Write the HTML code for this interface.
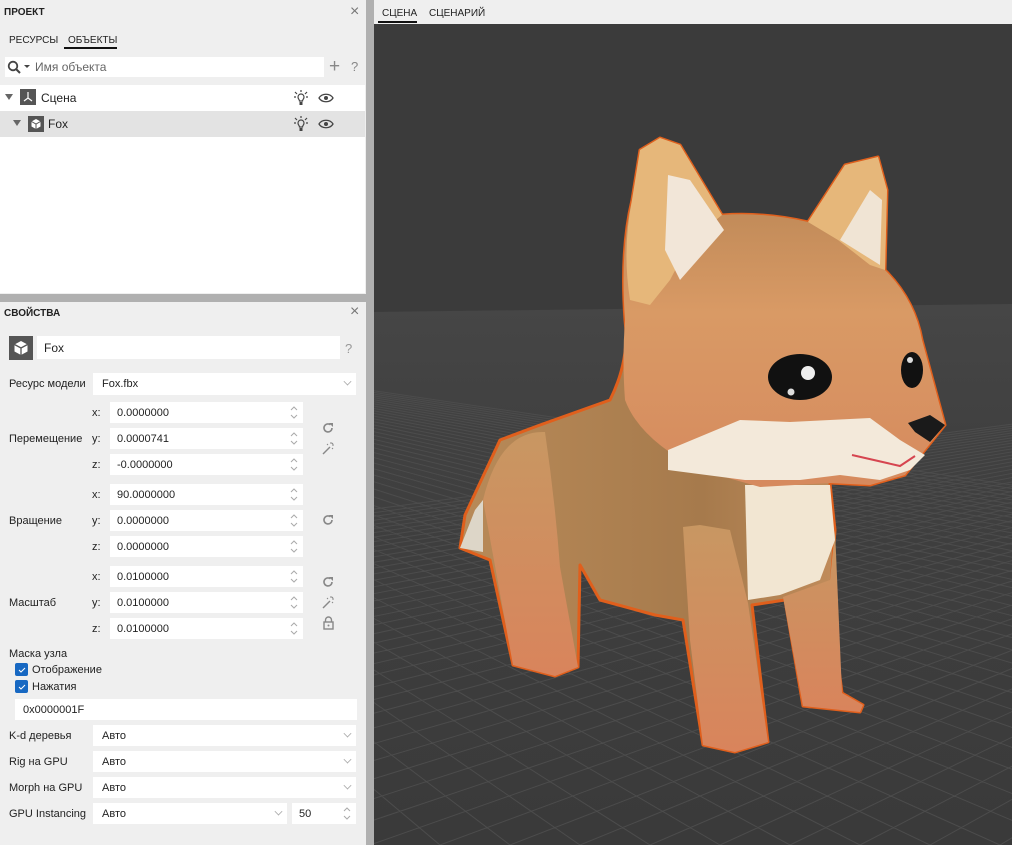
<!DOCTYPE html>
<html><head><meta charset="utf-8"><style>
*{box-sizing:border-box;margin:0;padding:0}
body{width:1012px;height:845px;overflow:hidden;background:#efefef;font-family:"Liberation Sans",sans-serif;font-size:11px;color:#222;position:relative}
.a{position:absolute}
.f{position:absolute;background:#fff;height:21px}
.f span{position:absolute;left:7px;top:5px}
.lbl{position:absolute;font-size:11px}
.spin{position:absolute;right:5px;top:3px;width:8px;height:15px}
.dd{position:absolute;background:#fff;height:21px}
.dd span{position:absolute;left:9px;top:5px}
.chev{position:absolute;right:5px;width:7px;height:7px;border-right:1px solid #aaa;border-bottom:1px solid #aaa;transform:rotate(45deg) scale(.8);top:5px}
</style></head><body>
<div class="a" style="left:4px;top:7px;font-weight:bold;font-size:10px">ПРОЕКТ</div>
<div class="a" style="left:350px;top:3px;font-size:16px;color:#777">×</div>
<div class="a" style="left:9px;top:35px;font-size:10px">РЕСУРСЫ</div>
<div class="a" style="left:68px;top:35px;font-size:10px">ОБЪЕКТЫ</div>
<div class="a" style="left:64px;top:47px;width:53px;height:2px;background:#111"></div>
<div class="a" style="left:5px;top:57px;width:319px;height:20px;background:#fff"></div>
<svg class="a" style="left:7px;top:60px" width="26" height="14"><circle cx="6" cy="6" r="4.3" fill="none" stroke="#444" stroke-width="1.8"/><line x1="9" y1="9" x2="13" y2="13" stroke="#444" stroke-width="2"/><path d="M17 5h6l-3 3z" fill="#444"/></svg>
<div class="a" style="left:35px;top:60px;font-size:12px;color:#666">Имя объекта</div>
<div class="a" style="left:329px;top:56px;font-size:19px;color:#888">+</div>
<div class="a" style="left:351px;top:59px;font-size:13px;color:#888">?</div>
<div class="a" style="left:0;top:85px;width:365px;height:208px;background:#fff"></div>
<div class="a" style="left:0;top:111px;width:365px;height:26px;background:#e3e3e3"></div>
<div class="a" style="left:5px;top:94px;border-left:4px solid transparent;border-right:4px solid transparent;border-top:6px solid #666"></div>
<div class="a" style="left:20px;top:89px;width:16px;height:16px;background:#555"></div>
<svg class="a" style="left:20px;top:89px" width="16" height="16"><path d="M8 3v6M8 9l-4 3M8 9l4 3" stroke="#fff" stroke-width="1.2" fill="none"/></svg>
<div class="a" style="left:41px;top:91px;font-size:12px">Сцена</div>
<div class="a" style="left:13px;top:120px;border-left:4px solid transparent;border-right:4px solid transparent;border-top:6px solid #666"></div>
<div class="a" style="left:28px;top:116px;width:16px;height:16px;background:#555"></div>
<svg class="a" style="left:28px;top:116px" width="16" height="16"><path d="M8 3l4.5 2.5v5L8 13 3.5 10.5v-5z" fill="#fff"/><path d="M3.5 5.5L8 8l4.5-2.5M8 8v5" stroke="#555" stroke-width="1" fill="none"/></svg>
<div class="a" style="left:48px;top:117px;font-size:12px">Fox</div>
<svg class="a" style="left:293px;top:89px" width="16" height="18"><path d="M5 8a3 3 0 1 1 6 0c0 2-1.5 2.5-1.5 4h-3C6.5 10.5 5 10 5 8z" fill="none" stroke="#444" stroke-width="1.2"/><rect x="6.5" y="13" width="3" height="3" fill="#444"/><path d="M8 1v2M2 3l2 2M14 3l-2 2M1 8h2M13 8h2" stroke="#444" stroke-width="1.2"/></svg>
<svg class="a" style="left:293px;top:115px" width="16" height="18"><path d="M5 8a3 3 0 1 1 6 0c0 2-1.5 2.5-1.5 4h-3C6.5 10.5 5 10 5 8z" fill="none" stroke="#444" stroke-width="1.2"/><rect x="6.5" y="13" width="3" height="3" fill="#444"/><path d="M8 1v2M2 3l2 2M14 3l-2 2M1 8h2M13 8h2" stroke="#444" stroke-width="1.2"/></svg>
<svg class="a" style="left:318px;top:92px" width="16" height="12"><path d="M1 6c3-5 11-5 14 0c-3 5-11 5-14 0z" fill="none" stroke="#444" stroke-width="1.3"/><circle cx="8" cy="6" r="2" fill="#444"/></svg>
<svg class="a" style="left:318px;top:118px" width="16" height="12"><path d="M1 6c3-5 11-5 14 0c-3 5-11 5-14 0z" fill="none" stroke="#444" stroke-width="1.3"/><circle cx="8" cy="6" r="2" fill="#444"/></svg>
<div class="a" style="left:366px;top:0;width:8px;height:845px;background:#b0b0b0"></div>
<div class="a" style="left:0;top:294px;width:366px;height:8px;background:#b0b0b0"></div>
<div class="a" style="left:4px;top:308px;font-weight:bold;font-size:10px">СВОЙСТВА</div>
<div class="a" style="left:350px;top:303px;font-size:16px;color:#777">×</div>
<div class="a" style="left:9px;top:336px;width:24px;height:24px;background:#555"></div>
<svg class="a" style="left:9px;top:336px" width="24" height="24"><path d="M12 5l6.5 3.5v7L12 19 5.5 15.5v-7z" fill="#fff"/><path d="M5.5 8.5L12 12l6.5-3.5M12 12v7" stroke="#555" stroke-width="1.3" fill="none"/></svg>
<div class="a" style="left:37px;top:336px;width:303px;height:23px;background:#fff"></div>
<div class="a" style="left:44px;top:341px;font-size:12px">Fox</div>
<div class="a" style="left:345px;top:341px;font-size:13px;color:#999">?</div>
<div class="lbl" style="left:9px;top:378px">Ресурс модели</div>
<div class="dd" style="left:93px;top:373px;width:263px;height:22px"><span style="top:5px">Fox.fbx</span><i class="chev"></i></div>
<div class="lbl" style="left:9px;top:433px">Перемещение</div>
<div class="lbl" style="left:9px;top:515px">Вращение</div>
<div class="lbl" style="left:9px;top:597px">Масштаб</div>
<div id="vec"></div>
<script>
var rows=[[402,'x:','0.0000000'],[428,'y:','0.0000741'],[454,'z:','-0.0000000'],[484,'x:','90.0000000'],[510,'y:','0.0000000'],[536,'z:','0.0000000'],[566,'x:','0.0100000'],[592,'y:','0.0100000'],[618,'z:','0.0100000']];
var h='';rows.forEach(function(r){h+='<div class="lbl" style="left:92px;top:'+(r[0]+5)+'px">'+r[1]+'</div><div class="f" style="left:110px;top:'+r[0]+'px;width:193px"><span>'+r[2]+'</span><svg class="spin" viewBox="0 0 8 15"><path d="M1 5l3-3 3 3M1 10l3 3 3-3" fill="none" stroke="#aaa"/></svg></div>';});
document.getElementById('vec').outerHTML=h;
</script>
<svg class="a" style="left:321px;top:421px" width="14" height="14"><path d="M11 7a4 4 0 1 1-1.5-3.2" fill="none" stroke="#888" stroke-width="1.6"/><path d="M8 2h4v4z" fill="#888"/></svg>
<svg class="a" style="left:321px;top:441px" width="14" height="14"><path d="M2 13l7-7" stroke="#888" stroke-width="1.4"/><path d="M10 1v2M13 4h-2M12 2l-1 1M6 3l1 1M12 8l-1-1" stroke="#888"/></svg>
<svg class="a" style="left:321px;top:513px" width="14" height="14"><path d="M11 7a4 4 0 1 1-1.5-3.2" fill="none" stroke="#888" stroke-width="1.6"/><path d="M8 2h4v4z" fill="#888"/></svg>
<svg class="a" style="left:321px;top:575px" width="14" height="14"><path d="M11 7a4 4 0 1 1-1.5-3.2" fill="none" stroke="#888" stroke-width="1.6"/><path d="M8 2h4v4z" fill="#888"/></svg>
<svg class="a" style="left:321px;top:595px" width="14" height="14"><path d="M2 13l7-7" stroke="#888" stroke-width="1.4"/><path d="M10 1v2M13 4h-2M12 2l-1 1M6 3l1 1M12 8l-1-1" stroke="#888"/></svg>
<svg class="a" style="left:322px;top:615px" width="13" height="15"><path d="M3.5 7V5a3 3 0 0 1 6 0v2" fill="none" stroke="#888" stroke-width="1.4"/><rect x="2" y="7" width="9" height="7" fill="none" stroke="#888" stroke-width="1.4"/><circle cx="6.5" cy="10.5" r="1" fill="#888"/></svg>
<div class="lbl" style="left:9px;top:648px">Маска узла</div>
<div class="a" style="left:15px;top:663px;width:13px;height:13px;background:#1768c2;border-radius:2px"></div>
<div class="a" style="left:15px;top:680px;width:13px;height:13px;background:#1768c2;border-radius:2px"></div>
<svg class="a" style="left:15px;top:663px" width="13" height="30"><path d="M4 7l2 2 4-4M4 24l2 2 4-4" stroke="#fff" fill="none"/></svg>
<div class="lbl" style="left:32px;top:664px">Отображение</div>
<div class="lbl" style="left:32px;top:681px">Нажатия</div>
<div class="f" style="left:15px;top:699px;width:342px"><span style="left:8px">0x0000001F</span></div>
<div class="lbl" style="left:9px;top:730px">K-d деревья</div>
<div class="lbl" style="left:9px;top:756px">Rig на GPU</div>
<div class="lbl" style="left:9px;top:782px">Morph на GPU</div>
<div class="lbl" style="left:9px;top:808px">GPU Instancing</div>
<div class="dd" style="left:93px;top:725px;width:263px"><span>Авто</span><i class="chev"></i></div>
<div class="dd" style="left:93px;top:751px;width:263px"><span>Авто</span><i class="chev"></i></div>
<div class="dd" style="left:93px;top:777px;width:263px"><span>Авто</span><i class="chev"></i></div>
<div class="dd" style="left:93px;top:803px;width:194px"><span>Авто</span><i class="chev"></i></div>
<div class="f" style="left:292px;top:803px;width:64px"><span>50</span><svg class="spin" viewBox="0 0 8 15"><path d="M1 5l3-3 3 3M1 10l3 3 3-3" fill="none" stroke="#aaa"/></svg></div>
<div class="a" style="left:382px;top:8px;font-size:10px">СЦЕНА</div>
<div class="a" style="left:429px;top:8px;font-size:10px">СЦЕНАРИЙ</div>
<div class="a" style="left:378px;top:21px;width:39px;height:2px;background:#111"></div>
<svg class="a" style="left:374px;top:24px" width="638" height="821" viewBox="374 24 638 821">
<defs>
<linearGradient id="hd" x1="0" y1="0" x2="0" y2="1"><stop offset="0" stop-color="#b08050"/><stop offset=".5" stop-color="#d99a65"/><stop offset="1" stop-color="#d68a5e"/></linearGradient>
<linearGradient id="bd" x1="0" y1="0" x2="1" y2="0"><stop offset="0" stop-color="#b88a58"/><stop offset=".5" stop-color="#a67a4c"/><stop offset="1" stop-color="#d69a66"/></linearGradient>
<linearGradient id="lg" x1="0" y1="0" x2="0" y2="1"><stop offset="0" stop-color="#c89762"/><stop offset="1" stop-color="#d9845c"/></linearGradient>
<linearGradient id="gr" x1="0" y1="0" x2="0" y2="1"><stop offset="0" stop-color="#464646"/><stop offset=".25" stop-color="#404040"/><stop offset="1" stop-color="#3a3a3a"/></linearGradient>
<clipPath id="gc"><path d="M374 312L1012 304V845H374Z"/></clipPath>
</defs>
<rect x="374" y="24" width="638" height="821" fill="#3b3b3b"/>
<path d="M374 312L1012 304V845H374Z" fill="url(#gr)"/>
<g clip-path="url(#gc)"><g id="grid" stroke="#4c4c4c" stroke-width="1" fill="none"></g></g>
<g stroke="#e05f1c" stroke-width="3" stroke-linejoin="round">
<path d="M465 515L500 440L540 425L610 400Q630 360 625 320Q620 250 632 200L640 150L660 138L680 145L722 215Q765 212 808 222L845 165L878 157L887 190L885 270Q915 300 922 340L945 425L905 475L870 485L830 483L835 530L830 600L842 693L863 705L860 712L803 706L785 600L752 605L768 742L735 752L703 745L683 620L655 615L600 600L580 565L578 667L555 676L513 665L490 560L460 548Z" fill="url(#bd)"/>
</g>
<path d="M483 500Q500 430 545 432Q555 500 560 567L578 667L555 676L513 665Z" fill="url(#lg)"/>
<path d="M683 527L700 525L730 530L748 603L768 742L735 752L703 745L690 640Z" fill="url(#lg)"/>
<path d="M783 597L830 580L835 530L842 693L863 705L860 712L803 706Z" fill="url(#lg)"/>
<path d="M745 485L830 485L835 540L820 580L780 595L748 600Z" fill="#f2e6d2"/>
<path d="M460 548L475 510L483 500L483 552Z" fill="#ddd6c8"/>
<path d="M625 320Q620 250 632 200L640 150L660 138L680 145L722 215Q765 212 808 222L845 165L878 157L887 190L885 270Q915 300 922 340L945 425L905 475L870 485L830 483L760 487L700 470Q640 440 625 400Q622 360 625 320Z" fill="url(#hd)"/>
<path d="M640 150L660 138L680 145L722 215Q690 240 670 280L650 305L630 300Q622 250 632 200Z" fill="#e6b77a"/>
<path d="M668 175L690 180L724 230L680 280L665 250Z" fill="#f2e6d8"/>
<path d="M845 165L878 157L887 190L885 270L870 265L838 240L808 222Z" fill="#e6b77a"/>
<path d="M870 190L882 200L880 265L840 240Z" fill="#f0e4d4"/>
<path d="M668 450L740 420L790 422L870 418L900 440L925 455L910 470L880 480L840 475L800 480L745 480L668 470Z" fill="#f3e9da"/>
<path d="M852 455L900 466L915 456" stroke="#d64550" stroke-width="2" fill="none"/>
<ellipse cx="800" cy="377" rx="32" ry="23" fill="#111"/>
<circle cx="808" cy="373" r="7" fill="#eee"/><circle cx="791" cy="392" r="3.5" fill="#ddd"/>
<ellipse cx="912" cy="370" rx="11" ry="18" fill="#111"/>
<circle cx="910" cy="360" r="3" fill="#ddd"/>
<path d="M908 423L930 415L945 425L930 442L915 432Z" fill="#1a1a1a"/>
</svg>
<script>
var g=document.getElementById('grid'),d='';
var v1x=-200,v2x=1900,vy=306;
for(var j=-40;j<=40;j++){
 var xb=650+j*70;
 d+='M'+v1x+' '+vy+'L'+xb+' 845';
 d+='M'+v2x+' '+vy+'L'+xb+' 845';
}
g.innerHTML='<path d="'+d+'"/>';
</script>
</body></html>
